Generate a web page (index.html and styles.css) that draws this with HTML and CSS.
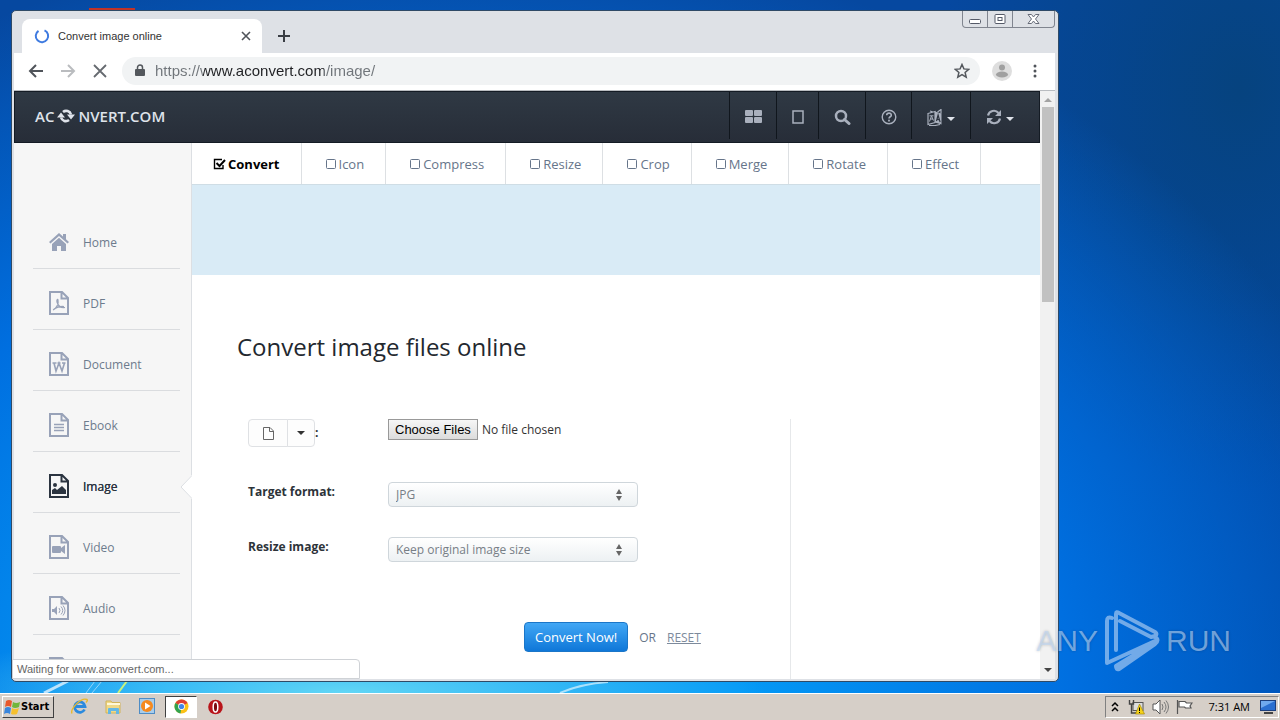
FILE: index.html
```html
<!DOCTYPE html>
<html lang="en">
<head>
    <meta charset="UTF-8">
    <meta name="viewport" content="width=device-width, initial-scale=1.0">
    <title>Convert image online</title>
    <link rel="stylesheet" href="styles.css">
</head>
<body>

<!-- shapes used more than once -->
<svg class="defs" width="0" height="0" aria-hidden="true">
    <symbol id="box" viewBox="0 0 12 12"><rect x="1.5" y="1.5" width="9" height="9" rx="1" fill="none" stroke="currentColor"/></symbol>
    <symbol id="file" viewBox="0 0 20 24"><path d="M1 1h12l6 6v16H1zM12.500 1v6.500H19" fill="none" stroke="currentColor" stroke-width="2"/></symbol>
    <symbol id="caret" viewBox="0 0 8 4"><path d="M0 0h8L4 4z" fill="currentColor"/></symbol>
    <symbol id="updown" viewBox="0 0 8 12"><path d="M4 0l3 5H1zM4 12l3-5H1z" fill="currentColor"/></symbol>
</svg>

<div class="desktop">
    <svg class="streaks" width="700" height="12" viewBox="0 0 700 12" aria-hidden="true">
        <g fill="none" stroke="#fff">
            <path d="M44 12L68 0" stroke-width="3" opacity=".7"/>
            <path d="M86 12L95 0M92 12l10-12" opacity=".5"/>
            <path d="M118 12l9-12" stroke="#c9f27c" stroke-width="2"/>
            <path d="M560 12q20-9 48-11" opacity=".6" stroke-width="2"/>
        </g>
    </svg>
    <div class="desk-icon"></div>

    <div class="window">
        <div class="tabstrip">
            <div class="tab">
                <svg width="16" height="16" viewBox="0 0 16 16"><path d="M10.500 2.300A6.200 6.200 0 1 1 4.500 2.800" fill="none" stroke="#3f7be0" stroke-width="2"/></svg>
                <span class="tab-title">Convert image online</span>
                <button class="plain" aria-label="Close tab"><svg width="10" height="10" viewBox="0 0 10 10"><path d="M1 1l8 8M9 1L1 9" stroke="#50545a" stroke-width="1.600"/></svg></button>
            </div>
            <button class="plain new-tab" aria-label="New tab"><svg width="12" height="12" viewBox="0 0 12 12"><path d="M6 0v12M0 6h12" stroke="#3a3e44" stroke-width="2"/></svg></button>
            <div class="win-buttons">
                <button class="plain" aria-label="Minimize"><svg width="13" height="12" viewBox="0 0 13 12"><rect x=".5" y="6.500" width="11" height="4" rx="1" fill="#fff" stroke="#555a68"/></svg></button>
                <button class="plain" aria-label="Restore"><svg width="13" height="12" viewBox="0 0 13 12"><rect x="1" y="1.500" width="10" height="9" rx="1" fill="#fff" stroke="#555a68"/><rect x="4" y="4.500" width="4" height="3" fill="none" stroke="#555a68"/></svg></button>
                <button class="plain wide" aria-label="Close"><svg width="13" height="12" viewBox="0 0 13 12"><path d="M1 1.500h3.500l2 2.500 2-2.500H12L8.500 6l3.500 4.500H8.500l-2-2.500-2 2.500H1L4.500 6z" fill="#fff" stroke="#666b78"/></svg></button>
            </div>
        </div>

        <div class="toolbar">
            <button class="plain" aria-label="Back"><svg width="16" height="16" viewBox="0 0 16 16"><path d="M15 8H2M8 2L2 8l6 6" fill="none" stroke="#50545a" stroke-width="2"/></svg></button>
            <button class="plain" aria-label="Forward"><svg width="16" height="16" viewBox="0 0 16 16"><path d="M1 8h13M8 2l6 6-6 6" fill="none" stroke="#babcbf" stroke-width="2"/></svg></button>
            <button class="plain" aria-label="Stop"><svg width="16" height="16" viewBox="0 0 16 16"><path d="M2 2l12 12M14 2L2 14" stroke="#666a70" stroke-width="1.800"/></svg></button>
            <div class="omnibox">
                <svg width="10" height="13" viewBox="0 0 10 13"><rect x="0" y="5" width="10" height="7" rx="1" fill="#54585d"/><path d="M2.500 5V3.500a2.500 2.500 0 0 1 5 0V5" fill="none" stroke="#54585d" stroke-width="1.500"/></svg>
                <input class="url" type="text" value="https://www.aconvert.com/image/" aria-label="Address">
                <svg width="16" height="16" viewBox="0 0 16 16"><path d="M8 1.500l1.900 4.400 4.800.4-3.600 3.200 1.100 4.700L8 11.700l-4.200 2.500 1.100-4.700-3.600-3.200 4.800-.4z" fill="none" stroke="#54585d" stroke-width="1.500"/></svg>
            </div>
            <svg width="20" height="20" viewBox="0 0 20 20"><circle cx="10" cy="10" r="10" fill="#dedede"/><circle cx="10" cy="6.500" r="3" fill="#a0a0a0"/><ellipse cx="10" cy="13.500" rx="6" ry="3" fill="#a0a0a0"/></svg>
            <button class="plain menu" aria-label="Menu"><svg width="4" height="14" viewBox="0 0 4 14"><g fill="#50545a"><circle cx="2" cy="2" r="1.500"/><circle cx="2" cy="7" r="1.500"/><circle cx="2" cy="12" r="1.500"/></g></svg></button>
        </div>

        <div class="viewport">
            <div class="page">
                <header class="navbar">
                    <a class="brand" href="#">AC<svg width="18" height="16" viewBox="0 0 18 16"><path d="M4 9.500a5 5 0 0 0 8 2.500M14 6.500A5 5 0 0 0 6 4" fill="none" stroke="currentColor" stroke-width="2.600"/><path d="M0 9.500l4-5 4 5zM10 6.500h8l-4 5z" fill="currentColor"/></svg>NVERT.COM</a>
                    <nav class="tools">
                        <a class="w47" href="#" aria-label="Apps"><svg width="17" height="14" viewBox="0 0 17 14"><g fill="currentColor"><rect width="8" height="6" rx="1"/><rect x="9" width="8" height="6" rx="1"/><rect y="7" width="8" height="6" rx="1"/><rect x="9" y="7" width="8" height="6" rx="1"/></g></svg></a>
                        <a class="w42" href="#" aria-label="Mobile"><svg width="12" height="14" viewBox="0 0 12 14"><rect x="1" y="1" width="10" height="12" fill="none" stroke="currentColor" stroke-width="1.500"/></svg></a>
                        <a class="w47" href="#" aria-label="Search"><svg width="17" height="16" viewBox="0 0 17 16"><circle cx="7" cy="7" r="5" fill="none" stroke="currentColor" stroke-width="2.500"/><path d="M10.500 10.500l4.500 4" stroke="currentColor" stroke-width="3" stroke-linecap="round"/></svg></a>
                        <a class="w46" href="#" aria-label="Help"><svg width="16" height="16" viewBox="0 0 16 16"><circle cx="8" cy="8" r="6.800" fill="none" stroke="currentColor" stroke-width="1.400"/><path d="M5.700 6.200c.2-2.800 4.700-2.700 4.600 0C10.300 7.800 8 7.700 8 9.500" fill="none" stroke="currentColor" stroke-width="1.600"/><rect x="7.100" y="10.700" width="1.800" height="1.800" fill="currentColor"/></svg></a>
                        <a class="w59" href="#" aria-label="Language"><svg width="16" height="17" viewBox="0 0 16 17"><path d="M8 2.500l6.500 2v11L8 13.500z" fill="currentColor"/><path d="M1 4.500L8 2.500v11l-7 2zM3 2l3 1M10.500 3L14 .5v4M2 16.500h6l5-1" fill="none" stroke="currentColor" stroke-width="1.200"/><path d="M2.500 12.500L4.500 7l2 4.500M3.500 10H6M2.500 6.800h4" fill="none" stroke="currentColor"/><path d="M9.500 12l1.600-6 2 7.200M10 10.200l2.500.6" fill="none" stroke="#2b323d" stroke-width="1.200"/></svg><svg class="drop" width="8" height="4"><use href="#caret"/></svg></a>
                        <a class="w69" href="#" aria-label="Convert"><svg width="16" height="16" viewBox="0 0 16 16"><g fill="none" stroke="currentColor" stroke-width="2.200"><path d="M2 6.500A6 6 0 0 1 12.500 4M14 9.500A6 6 0 0 1 3.500 12"/></g><path d="M15 1v6H9zM1 15V9h6z" fill="currentColor"/></svg><svg class="drop" width="8" height="4"><use href="#caret"/></svg></a>
                    </nav>
                </header>

                <div class="columns">
                    <aside class="sidebar">
                        <a href="#"><svg width="20" height="24" viewBox="0 0 20 24"><path d="M10 3L0 12l1.500 1.500L10 6l8.500 7.500L20 12l-3-2.800V4h-3v2.500zM3 14l7-6.200 7 6.200v7h-5v-5H8v5H3z" fill="currentColor"/></svg>Home</a>
                        <a href="#"><svg width="20" height="24"><use href="#file"/><path d="M4 19c3-1 6-6 5-10-.5-1.500-1.500 0-1 2 1 4 4 6 8 5.500M5 18c3-2 6-3 10-2.500" fill="none" stroke="currentColor" stroke-width="1.200"/></svg>PDF</a>
                        <a href="#"><svg width="20" height="24"><use href="#file"/><path d="M3.500 11h4M8.500 11h3M13 11h3.500M5 11l2 8 3-8 3 8 2.500-8" fill="none" stroke="currentColor" stroke-width="1.600"/></svg>Document</a>
                        <a href="#"><svg width="20" height="24"><use href="#file"/><path d="M5 11.500h10M5 14.500h10M5 17.500h10" stroke="currentColor" stroke-width="1.600"/></svg>Ebook</a>
                        <a class="current" href="#"><svg width="20" height="24"><use href="#file"/><path d="M3 20v-4l3-2 2 2 5-4 4 4v4z" fill="currentColor"/><circle cx="6" cy="11" r="2" fill="currentColor"/></svg>Image</a>
                        <a href="#"><svg width="20" height="24"><use href="#file"/><path d="M3 12q0-1 1-1h7q1 0 1 1v1l4-3v9l-4-3v1q0 1-1 1H4q-1 0-1-1z" fill="currentColor"/></svg>Video</a>
                        <a href="#"><svg width="20" height="24"><use href="#file"/><path d="M3 13h2l3-3v9l-3-3H3z" fill="currentColor"/><path d="M10 12q2 2.500 0 5M12 10.500q3.500 4 0 8M14 9.500q4 5 0 10" fill="none" stroke="currentColor"/></svg>Audio</a>
                        <a href="#" aria-label="Archive"><svg width="20" height="24"><use href="#file"/><path d="M6 1v7M9 1v7" stroke="currentColor" stroke-width="2"/></svg></a>
                        <svg class="notch" width="12" height="24" viewBox="0 0 12 24"><path d="M12 0L1 12l11 12z" fill="#fff"/><path d="M11.500 1L1 12l10.500 11" fill="none" stroke="#dcdfe3"/></svg>
                    </aside>

                    <main class="content">
                        <nav class="subnav">
                            <a class="current" href="#"><svg width="13" height="12" viewBox="0 0 13 12"><path d="M10 7v3.500H1.500v-9H9" fill="none" stroke="currentColor" stroke-width="1.400"/><path d="M3.500 5l3 3L12 2" fill="none" stroke="currentColor" stroke-width="2"/></svg>Convert</a>
                            <a href="#"><svg width="12" height="12"><use href="#box"/></svg>Icon</a>
                            <a href="#"><svg width="12" height="12"><use href="#box"/></svg>Compress</a>
                            <a href="#"><svg width="12" height="12"><use href="#box"/></svg>Resize</a>
                            <a href="#"><svg width="12" height="12"><use href="#box"/></svg>Crop</a>
                            <a href="#"><svg width="12" height="12"><use href="#box"/></svg>Merge</a>
                            <a href="#"><svg width="12" height="12"><use href="#box"/></svg>Rotate</a>
                            <a href="#"><svg width="12" height="12"><use href="#box"/></svg>Effect</a>
                        </nav>
                        <div class="banner"></div>

                        <h1>Convert image files online</h1>

                        <form class="convert">
                            <div class="field">
                                <label for="files">
                                    <span class="btn-group">
                                        <button type="button" aria-label="File"><svg width="11" height="13" viewBox="0 0 11 13"><path d="M.5.500h6.500l3.500 3.500v8.500H.5zM6.500.500v4h4" fill="none" stroke="#666"/></svg></button><button type="button" class="toggle" aria-label="Source"><svg width="8" height="4"><use href="#caret"/></svg></button>
                                    </span>:
                                </label>
                                <input type="file" id="files" multiple>
                            </div>
                            <div class="field">
                                <label for="format">Target format:</label>
                                <div class="select">
                                    <select id="format"><option>JPG</option><option>PNG</option><option>GIF</option></select>
                                    <svg width="8" height="12"><use href="#updown"/></svg>
                                </div>
                            </div>
                            <div class="field">
                                <label for="resize">Resize image:</label>
                                <div class="select">
                                    <select id="resize"><option>Keep original image size</option><option>Change width and height</option></select>
                                    <svg width="8" height="12"><use href="#updown"/></svg>
                                </div>
                            </div>
                            <div class="actions">
                                <button type="submit" class="submit">Convert Now!</button>
                                <span>OR</span>
                                <button type="reset" class="reset">RESET</button>
                            </div>
                        </form>
                    </main>
                </div>
            </div>

            <div class="scrollbar">
                <svg width="8" height="4" viewBox="0 0 8 4"><path d="M0 4h8L4 0z" fill="#a3a3a3"/></svg>
                <div class="thumb"></div>
                <svg width="8" height="4" class="down"><use href="#caret"/></svg>
            </div>
        </div>
        <div class="status">Waiting for www.aconvert.com...</div>
    </div>

    <div class="watermark">
        <span>ANY</span>
        <svg width="56" height="62" viewBox="0 0 56 62"><g fill="none" stroke="currentColor" stroke-width="4" stroke-linejoin="round" stroke-linecap="round"><path d="M8 8Q3 6 3 11v42l48-22M12 40V4q0-3 3-1l36 19q3 2 0 4l-4 1L16 11M51 27q5 3 0 7L15 59q-3 1-3-3l36-22"/></g></svg>
        <span>RUN</span>
    </div>
</div>

<footer class="taskbar">
    <button class="start"><svg width="17" height="16" viewBox="0 0 17 16"><path d="M2 2q3-2 6 0L7 8Q4 6 1 8z" fill="#e8582c"/><path d="M9 3q3 2 7 0l-1 5q-4 2-7 0z" fill="#71b63b"/><path d="M1 9q3-2 6 0l-1 6q-3-2-6 0z" fill="#3a86dc"/><path d="M8 9q3 2 7 0l-2 6q-3 1-6 0z" fill="#f6c02e"/></svg>Start</button>
    <div class="quick">
        <button class="plain" aria-label="Internet Explorer"><svg width="17" height="17" viewBox="0 0 17 17"><path d="M13.500 11.500A5.200 5.200 0 1 1 14 8.500H4" fill="none" stroke="#2b8ade" stroke-width="2.800"/><path d="M1 15.500C-1 11 10-1 16 1.500q1 1-1 3" fill="none" stroke="#e7b92e" stroke-width="1.400"/></svg></button>
        <button class="plain" aria-label="Explorer"><svg width="17" height="17" viewBox="0 0 17 17"><path d="M1 3h5l1 1.500h8V15H1z" fill="#f0d987" stroke="#d1b35a"/><path d="M2 6h13" stroke="#fff8d8" stroke-width="2"/><path d="M3 16v-5q0-1 1-1h9q1 0 1 1v5h-3v-3H6v3z" fill="#64b7e4"/></svg></button>
        <button class="plain" aria-label="Media Player"><svg width="17" height="17" viewBox="0 0 17 17"><rect x=".5" y=".5" width="15" height="15" fill="#a8cdeb" stroke="#4e8cc5"/><circle cx="8" cy="8" r="6" fill="#f58a1f"/><path d="M6 4.500l5.500 3.500L6 11.500z" fill="#fff"/></svg></button>
        <button class="plain active" aria-label="Chrome"><svg width="15" height="15" viewBox="0 0 15 15"><circle cx="7.500" cy="7.500" r="7" fill="#fbc116"/><path d="M7.500 7.500L1.400 4A7 7 0 0 1 13.600 4z" fill="#df4033"/><path d="M7.500 7.500L1.400 4a7 7 0 0 0 5.100 10.400z" fill="#32a350"/><circle cx="7.500" cy="7.500" r="3.400" fill="#fff"/><circle cx="7.500" cy="7.500" r="2.600" fill="#4285e8"/></svg></button>
        <button class="plain" aria-label="Opera"><svg width="15" height="16" viewBox="0 0 15 16"><circle cx="7.500" cy="8" r="7.300" fill="#b9141a"/><ellipse cx="7.500" cy="8" rx="2.300" ry="5" fill="#7c0a0f" stroke="#fff" stroke-width="1.500"/></svg></button>
    </div>
    <div class="tray">
        <svg width="8" height="12" viewBox="0 0 8 12"><path d="M1 5l3-3 3 3M1 10l3-3 3 3" fill="none" stroke="#000" stroke-width="1.500"/></svg>
        <svg class="net" width="17" height="16" viewBox="0 0 17 16"><rect x="5" y="3.500" width="10" height="8" fill="#ddd" stroke="#555"/><path d="M1.500 1v4h4V1M3.500 5v9h6" fill="none" stroke="#444" stroke-width="1.400"/><path d="M11.500 5l5 10h-9z" fill="#f5d21a" stroke="#9b7e00" stroke-width=".6"/><path d="M11.500 8.500v3.500M11.500 13v1" stroke="#000"/></svg>
        <svg width="17" height="16" viewBox="0 0 17 16"><path d="M1 5h3l4-4v14l-4-4H1z" fill="#fff" stroke="#555"/><path d="M10 5q2 3 0 6M12 3q4 5 0 10M14 1.500q5 6.500 0 13" fill="none" stroke="#777"/></svg>
        <svg width="17" height="16" viewBox="0 0 17 16"><path d="M1.500 1v14M3 2.500h6l1.500 1.500H16l-2 3 1 2H9.500L8.500 8H3z" fill="#fff" stroke="#555" stroke-width="1.200"/></svg>
        <span class="clock">7:31 AM</span>
        <svg width="17" height="14" viewBox="0 0 17 14"><rect x=".5" y=".5" width="15" height="10" fill="#2a6fd0" stroke="#1d3f7c"/><path d="M1 1h14L1 8z" fill="#6fa9ee"/><path d="M4 13h9" stroke="#444" stroke-width="2"/></svg>
    </div>
</footer>

</body>
</html>
```
FILE: styles.css
```css
* {
    box-sizing: border-box;
}

body {
    margin: 0;
    height: 100vh;
    display: flex;
    flex-direction: column;
    overflow: hidden;
    font-family: "Open Sans", "Noto Sans", sans-serif;
    font-size: 12px;
    color: #333;
}

.defs {
    position: absolute;
}

svg {
    flex: none;
    display: block;
}

a {
    color: inherit;
    text-decoration: none;
}

.plain {
    display: flex;
    align-items: center;
    justify-content: center;
    padding: 0;
    border: 0;
    background: none;
}

/* desktop */
.desktop {
    flex: 1;
    position: relative;
    overflow: hidden;
    background:
        radial-gradient(ellipse 420px 70px at 27% 100%, #62d6f5, rgba(40, 180, 245, 0)),
        radial-gradient(ellipse 76% 110% at 35% 100%, #0499f6 30%, #006fe0 64%, rgba(0, 80, 180, 0) 100%),
        radial-gradient(ellipse 300px 400px at 1240px 90px, #06437f, rgba(0, 70, 160, 0)),
        linear-gradient(#0648a0, #0048a6);
}

.streaks {
    position: absolute;
    left: 0;
    bottom: 0;
}

.desk-icon {
    position: absolute;
    left: 89px;
    top: 8px;
    width: 46px;
    height: 4px;
    background: #c23327;
}

.window {
    position: absolute;
    top: 10px;
    left: 11px;
    right: 221px;
    bottom: 11px;
    display: flex;
    flex-direction: column;
    padding: 0 3px 2px 2px;
    border: 1px solid #2f4a66;
    border-radius: 5px;
    background: #dee1e6;
    overflow: hidden;
}

/* browser chrome */
.tabstrip {
    display: flex;
    align-items: flex-end;
    height: 42px;
}

.tab {
    display: flex;
    align-items: center;
    gap: 8px;
    width: 240px;
    height: 34px;
    margin-left: 8px;
    padding: 0 11px 0 12px;
    border-radius: 8px 8px 0 0;
    background: #fff;
}

.tab-title {
    flex: 1;
    font-family: "Liberation Sans", Arial, sans-serif;
    font-size: 11px;
}

.new-tab {
    width: 44px;
    height: 34px;
}

.win-buttons {
    display: flex;
    align-self: flex-start;
    margin-left: auto;
    border: 1px solid #80858f;
    border-top: 0;
    border-radius: 0 0 4px 4px;
}

.win-buttons .plain {
    width: 25px;
    height: 16px;
    border-right: 1px solid #80858f;
}

.win-buttons .wide {
    width: 41px;
    border-right: 0;
}

.toolbar {
    display: flex;
    align-items: center;
    gap: 16px;
    height: 38px;
    padding: 0 18px 2px 14px;
    border-bottom: 1px solid #b9bcc0;
    background: #fff;
}

.menu {
    margin-left: 5px;
}

.omnibox {
    flex: 1;
    display: flex;
    align-items: center;
    gap: 10px;
    height: 28px;
    padding: 0 10px 0 13px;
    margin: 0 -4px 0 -2px;
    border-radius: 14px;
    background: #f1f3f4;
}

.url {
    flex: 1;
    min-width: 0;
    padding: 0;
    border: 0;
    outline: 0;
    font-family: "Liberation Sans", Arial, sans-serif;
    font-size: 15px;
    /* host stands out from the scheme and path */
    color: transparent;
    background: linear-gradient(90deg, #70757a 48px, #202124 48px, #202124 169px, #70757a 169px);
    background-clip: text;
    -webkit-background-clip: text;
}

.viewport {
    flex: 1;
    display: flex;
    min-height: 0;
}

.page {
    flex: 1;
    display: flex;
    flex-direction: column;
    overflow: hidden;
    background: #fff;
}

.scrollbar {
    display: flex;
    flex-direction: column;
    align-items: center;
    width: 15px;
    padding: 7px 0;
    background: #f1f1f1;
    color: #444;
}

.thumb {
    width: 12px;
    height: 195px;
    margin-top: 5px;
    background: #c1c1c1;
}

.down {
    margin-top: auto;
}

.status {
    position: absolute;
    left: 0;
    bottom: 2px;
    width: 348px;
    height: 20px;
    padding-left: 4px;
    border: 1px solid #cfd2d6;
    border-radius: 0 4px 0 0;
    background: #fff;
    font-family: "Liberation Sans", Arial, sans-serif;
    font-size: 11px;
    line-height: 18px;
    color: #666;
}

/* site header */
.navbar {
    flex: none;
    display: flex;
    justify-content: space-between;
    height: 52px;
    border: 1px solid #141b24;
    background: linear-gradient(#2f3944, #272d38);
}

.brand {
    display: flex;
    align-items: center;
    gap: 3px;
    padding: 0 0 2px 20px;
    font-size: 15px;
    font-weight: 600;
    color: #dfe3ea;
}

.tools {
    display: flex;
    color: #a9b0bd;
}

.tools a {
    display: flex;
    align-items: center;
    justify-content: center;
    gap: 4px;
    height: 47px;
    padding-top: 3px;
    border-left: 1px solid #10161d;
}

.tools .drop {
    margin-top: 4px;
    color: #dfe3ea;
}

.w42 {
    width: 42px;
}

.w46 {
    width: 46px;
}

.w47 {
    width: 47px;
}

.w59 {
    width: 59px;
}

.w69 {
    width: 69px;
    padding-right: 10px;
}

.columns {
    flex: 1;
    display: flex;
    min-height: 0;
}

/* sidebar */
.sidebar {
    position: relative;
    flex: none;
    width: 178px;
    padding: 65px 11px 0 19px;
    border-right: 1px solid #dcdfe3;
    background: #f6f6f6;
    color: #6d7b8d;
}

.sidebar a {
    display: flex;
    align-items: center;
    gap: 14px;
    height: 61px;
    padding: 9px 0 0 16px;
    border-bottom: 1px solid #dadcdf;
}

.sidebar a svg {
    margin-bottom: 2px;
    color: #98a2b8;
}

.sidebar .current,
.sidebar .current svg {
    color: #2b3440;
}

.sidebar .current {
    text-shadow: 0 0 0 #2b3440;
}

.sidebar .notch {
    position: absolute;
    right: -1px;
    top: 332px;
}

/* content */
.content {
    flex: 1;
    min-width: 0;
}

.subnav {
    display: flex;
    height: 42px;
    border-bottom: 1px solid #cfdde5;
    font-size: 13px;
    color: #66758a;
}

.subnav a {
    display: flex;
    align-items: center;
    gap: 2px;
    padding: 0 21px 0 23px;
    border-right: 1px solid #dde0e3;
}

.subnav .current {
    padding-left: 21px;
    font-weight: 700;
    color: #000;
}

.banner {
    height: 90px;
    background: #d9ebf6;
}

h1 {
    margin: 54px 45px;
    font-size: 24px;
    line-height: 36px;
    font-weight: 400;
    color: #23282f;
}

.convert {
    width: 543px;
    height: 300px;
    margin-left: 56px;
    border-right: 1px solid #e6e8ea;
}

.field {
    display: flex;
    align-items: flex-start;
    height: 55px;
}

.field:first-child {
    height: 63px;
}

.field label {
    display: flex;
    align-items: center;
    width: 140px;
    line-height: 20px;
    font-weight: 700;
    color: #2d3339;
}

.btn-group {
    display: flex;
}

.btn-group button {
    display: flex;
    align-items: center;
    justify-content: center;
    width: 40px;
    height: 28px;
    padding: 0;
    border: 1px solid #dfe1e4;
    border-radius: 4px 0 0 4px;
    background: #fdfdfd;
    color: #333;
}

.btn-group .toggle {
    width: 28px;
    margin-left: -1px;
    border-radius: 0 4px 4px 0;
}

input[type="file"] {
    font-family: inherit;
    font-size: 12px;
    color: #333;
}

input[type="file"]::file-selector-button {
    height: 21px;
    padding: 0 6px;
    border: 1px solid #999;
    border-radius: 0;
    background: linear-gradient(#f6f6f6, #dcdcdc);
    font-family: "Liberation Sans", Arial, sans-serif;
    font-size: 13px;
    color: #000;
}

.select {
    position: relative;
    width: 250px;
}

.select select {
    display: block;
    width: 100%;
    height: 25px;
    padding: 0 30px 0 7px;
    appearance: none;
    border: 1px solid #cfd6db;
    border-radius: 4px;
    background: linear-gradient(#fff, #edf1f3);
    font-family: inherit;
    font-size: 12px;
    color: #777e86;
}

.select svg {
    position: absolute;
    right: 15px;
    top: 7px;
    color: #666;
    pointer-events: none;
}

.actions {
    display: flex;
    align-items: center;
    gap: 11px;
    margin-top: 30px;
    padding-left: 276px;
    color: #66758a;
}

.submit {
    height: 30px;
    padding: 0 10px;
    border: 1px solid #1b76c8;
    border-radius: 4px;
    background: linear-gradient(#41a7f5, #0f77d8);
    font-family: inherit;
    font-size: 13px;
    color: #fff;
}

.reset {
    padding: 0;
    border: 0;
    background: none;
    font-family: inherit;
    font-size: 12px;
    text-decoration: underline;
    color: #7d8a9c;
}

/* watermark laid over window and wallpaper */
.watermark {
    position: absolute;
    right: 49px;
    bottom: 20px;
    display: flex;
    align-items: center;
    gap: 6px;
    font-family: "Liberation Sans Narrow", "Liberation Sans", sans-serif;
    font-size: 30px;
    line-height: 64px;
    color: rgba(190, 215, 245, 0.6);
    text-shadow: 0 0 3px rgba(0, 0, 0, 0.2);
}

/* taskbar */
.taskbar {
    flex: none;
    display: flex;
    align-items: center;
    height: 27px;
    padding: 1px 1px 2px 2px;
    border-top: 1px solid #fff;
    background: #d6cfc8;
}

.start {
    display: flex;
    align-items: center;
    width: 52px;
    height: 22px;
    padding: 0 0 0 1px;
    border: 1px solid;
    border-color: #fff #404040 #404040 #fff;
    background: #d6cfc8;
    font-family: "DejaVu Sans Condensed", "DejaVu Sans", sans-serif;
    font-size: 11px;
    font-weight: 700;
    color: #000;
}

.quick {
    display: flex;
    gap: 2px;
    margin-left: 9px;
}

.quick .plain {
    width: 32px;
    height: 22px;
}

.quick .active {
    border: 1px solid;
    border-color: #404040 #fff #fff #404040;
    background: #fff;
}

.tray {
    display: flex;
    align-items: center;
    gap: 7px;
    height: 22px;
    margin-left: auto;
    padding: 0 1px 0 5px;
    border: 1px solid;
    border-color: #808080 #fff #fff #808080;
    color: #000;
}

.net {
    margin-left: 2px;
}

.clock {
    margin: 0 3px 0 9px;
    font-size: 11px;
}
```
